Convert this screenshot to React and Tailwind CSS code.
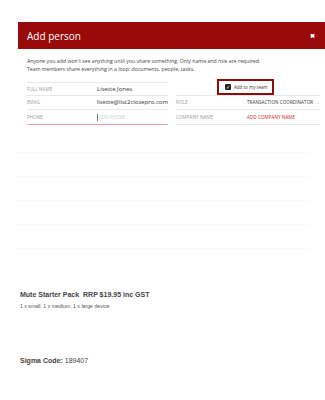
import React from "react";

const leftRows = [
  { label: "FULL NAME", value: "Lisette Jones" },
  { label: "EMAIL", value: "lisette@list2closepro.com" },
  { label: "PHONE", value: "ADD PHONE", placeholder: true },
];

const App = () => {
  return (
    <div className="w-[325px] h-[400px] bg-white overflow-hidden" style={{ fontFamily: "'Open Sans', sans-serif" }}>
      <div className="pt-[22px] pl-[18px]">
        <div className="h-[27px] bg-[#990a0a] flex items-center justify-between pl-[9px] pr-[10px]">
          <span className="text-[10px] text-white leading-none">Add person</span>
          <span className="text-[6px] text-white font-bold leading-none">✖</span>
        </div>
      </div>

      <div className="pl-[27px] pt-[8px] text-[5.2px] leading-[8px] text-[#444]">
        <p>Anyone you add won't see anything until you share something. Only name and role are required.</p>
        <p>Team members share everything in a loop: documents, people, tasks.</p>
      </div>

      <div className="flex mt-[9px] pl-[27px]">
        <div className="w-[141px]">
          {leftRows.map((row, i) => (
            <div
              key={row.label}
              className={`flex items-center h-[14px] border-b ${i === 0 ? "border-t border-t-[#e8e8e8]" : ""} ${
                i === 2 ? "border-b-[#e8a0a0] h-[15px]" : "border-b-[#e8e8e8]"
              }`}
            >
              <span className="w-[70px] text-[4.5px] text-[#999] tracking-wide">{row.label}</span>
              {row.placeholder ? (
                <span className="flex items-center text-[4.5px] text-[#ccc]">
                  <span className="w-px h-[7px] bg-[#777] mr-[1px]" />
                  {row.value}
                </span>
              ) : (
                <span className="text-[6px] text-[#333]">{row.value}</span>
              )}
            </div>
          ))}
        </div>

        <div className="w-[144px] ml-[8px]">
          <div className="relative h-[14px] border-b border-b-[#e8e8e8]">
            <div className="absolute left-[41px] top-[-3px] w-[57px] h-[16px] border-2 border-[#8e0c0c] bg-white flex items-center pl-[6px]">
              <span className="w-[6px] h-[6px] bg-[#222] rounded-[1px] flex items-center justify-center text-white text-[5px] leading-none">✓</span>
              <span className="ml-[3px] text-[4.5px] text-[#333]">Add to my team</span>
            </div>
          </div>
          <div className="flex items-center h-[14px] border-b border-b-[#e8e8e8]">
            <span className="w-[71px] text-[4.5px] text-[#999] tracking-wide">ROLE</span>
            <span className="text-[4.5px] text-[#333] tracking-wide">TRANSACTION COORDINATOR</span>
            <span className="ml-auto text-[5px] text-[#bbb]">⌄</span>
          </div>
          <div className="flex items-center h-[15px] border-b border-b-[#e8e8e8]">
            <span className="w-[71px] text-[4.5px] text-[#999] tracking-wide">COMPANY NAME</span>
            <span className="text-[4.5px] text-[#c0191f] tracking-wide">ADD COMPANY NAME</span>
          </div>
        </div>
      </div>

      <div className="ml-[18px] w-[290px] mt-[27px] flex flex-col gap-[23px]">
        <div className="border-t border-dotted border-[#f0f0f0]" />
        <div className="border-t border-dotted border-[#f0f0f0]" />
        <div className="border-t border-dotted border-[#f0f0f0]" />
        <div className="border-t border-dotted border-[#f0f0f0]" />
        <div className="border-t border-dotted border-[#f0f0f0]" />
      </div>

      <div className="pl-[20px] mt-[41px] text-[#444]" style={{ fontFamily: "'Liberation Sans', Arial, sans-serif" }}>
        <p className="text-[7px] font-bold leading-[10px]">Mute Starter Pack&nbsp; RRP $19.95 inc GST</p>
        <p className="text-[5.2px] leading-[8px] mt-[2px] text-[#555]">1 x small, 1 x medium, 1 x large device</p>
        <p className="text-[7px] leading-[10px] mt-[46px]">
          <span className="font-bold">Sigma Code:</span> 189407
        </p>
      </div>
    </div>
  );
};

export default App;
